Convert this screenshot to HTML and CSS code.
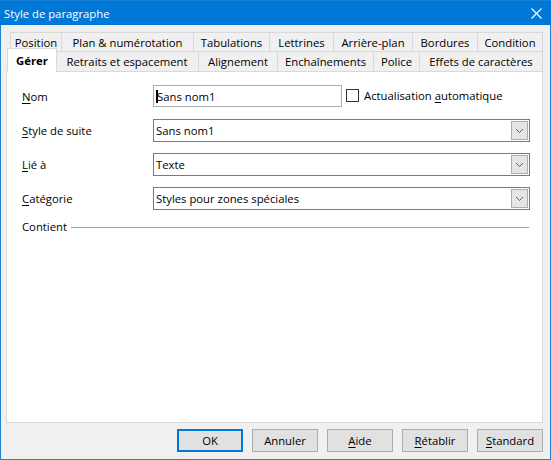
FILE: index.html
```html
<!DOCTYPE html>
<html lang="fr">
<head>
<meta charset="utf-8">
<title>Style de paragraphe</title>
<link rel="stylesheet" href="styles.css">
</head>
<body>
<div class="window">
  <div class="titlebar">
    <span class="title">Style de paragraphe</span>
    <svg class="close" width="11" height="11" viewBox="0 0 11 11"><path d="M0.5 0.5 L10.5 10.5 M10.5 0.5 L0.5 10.5" stroke="#fff" stroke-width="1.1" fill="none"/></svg>
  </div>
  <div class="tabs">
    <div class="tabrow row1">
      <div class="tab">Position</div>
      <div class="tab">Plan &amp; numérotation</div>
      <div class="tab">Tabulations</div>
      <div class="tab">Lettrines</div>
      <div class="tab">Arrière-plan</div>
      <div class="tab">Bordures</div>
      <div class="tab">Condition</div>
    </div>
    <div class="tabrow row2">
      <div class="tab selected">Gérer</div>
      <div class="tab">Retraits et espacement</div>
      <div class="tab">Alignement</div>
      <div class="tab">Enchaînements</div>
      <div class="tab">Police</div>
      <div class="tab">Effets de caractères</div>
    </div>
  </div>
  <div class="panel">
    <div class="form">
      <div class="lbl"><u>N</u>om</div>
      <div class="line">
        <div class="entry"><span class="caret"></span>Sans nom1</div>
        <div class="check"><span class="box"></span><span>Actualisation <u>a</u>utomatique</span></div>
      </div>
      <div class="lbl"><u>S</u>tyle de suite</div>
      <div class="combo"><span class="value">Sans nom1</span><span class="drop"><svg width="9" height="6" viewBox="0 0 9 6"><path d="M1 1 L4.5 4.5 L8 1" stroke="#606060" stroke-width="1" fill="none"/></svg></span></div>
      <div class="lbl"><u>L</u>ié à</div>
      <div class="combo"><span class="value">Texte</span><span class="drop"><svg width="9" height="6" viewBox="0 0 9 6"><path d="M1 1 L4.5 4.5 L8 1" stroke="#606060" stroke-width="1" fill="none"/></svg></span></div>
      <div class="lbl"><u>C</u>atégorie</div>
      <div class="combo"><span class="value">Styles pour zones spéciales</span><span class="drop"><svg width="9" height="6" viewBox="0 0 9 6"><path d="M1 1 L4.5 4.5 L8 1" stroke="#606060" stroke-width="1" fill="none"/></svg></span></div>
    </div>
    <div class="section"><span>Contient</span><span class="rule"></span></div>
  </div>
  <div class="buttons">
    <div class="btn default">OK</div>
    <div class="btn">Annuler</div>
    <div class="btn"><u>A</u>ide</div>
    <div class="btn"><u>R</u>établir</div>
    <div class="btn"><u>S</u>tandard</div>
  </div>
</div>
</body>
</html>
```
FILE: styles.css
```css
html, body {
  margin: 0;
  padding: 0;
}
body {
  font-family: "Open Sans", "Noto Sans", "DejaVu Sans", sans-serif;
  font-size: 11.3px;
  color: #000;
  background: #f0f0f0;
}
u {
  text-decoration: underline;
  text-underline-offset: 2px;
}
.window {
  width: 551px;
  height: 460px;
  box-sizing: border-box;
  border: 1px solid #1883d7;
  background: #f0f0f0;
  display: flex;
  flex-direction: column;
}
.titlebar {
  height: 24px;
  background: #0078d7;
  color: #fff;
  display: flex;
  align-items: center;
  justify-content: space-between;
  padding: 0 9px 0 4px;
  margin: 0 -1px;
}
.title {
  font-size: 11.3px;
}
.close {
  display: block;
}
.tabs {
  margin-top: 7px;
}
.tabrow {
  display: grid;
}
.row1 {
  margin-left: 9px;
  grid-template-columns: 52px 132px 76px 64px 79px 65px 65px;
  grid-template-rows: 19px;
}
.row2 {
  margin-left: 8px;
  grid-template-columns: 47px 143px 79px 96px 46px 123px;
  grid-template-rows: 20px;
}
.tab {
  box-sizing: border-box;
  border-top: 1px solid #d9d9d9;
  border-right: 1px solid #d9d9d9;
  background: #f0f0f0;
  display: flex;
  align-items: center;
  justify-content: center;
  white-space: nowrap;
}
.tab:first-child {
  border-left: 1px solid #d9d9d9;
}
.tab.selected {
  position: relative;
  z-index: 1;
  background: #fff;
  font-weight: bold;
  margin: -3px -1px -1px -2px;
  padding-bottom: 0;
}
.panel {
  margin-left: 5px;
  width: 537px;
  height: 352px;
  box-sizing: border-box;
  border: 1px solid #d9d9d9;
  background: #fff;
  padding: 13px 12px 0 15px;
}
.form {
  display: grid;
  grid-template-columns: 131px 377px;
  grid-template-rows: repeat(4, 23px);
  row-gap: 11px;
  align-items: center;
}
.lbl {
  white-space: nowrap;
}
.line {
  display: flex;
  align-items: center;
  height: 23px;
}
.entry {
  position: relative;
  width: 189px;
  height: 22px;
  box-sizing: border-box;
  border: 1px solid #abadb3;
  padding-left: 3px;
  display: flex;
  align-items: center;
  align-self: flex-start;
}
.caret {
  position: absolute;
  left: 2px;
  top: 4px;
  width: 2px;
  height: 13px;
  background: #000;
}
.check {
  display: flex;
  align-items: center;
  margin-left: 4px;
  white-space: nowrap;
  margin-top: -3px;
}
.box {
  width: 13px;
  height: 13px;
  box-sizing: border-box;
  border: 1px solid #333;
  background: #fff;
  margin-right: 5px;
}
.combo {
  height: 23px;
  box-sizing: border-box;
  border: 1px solid #7a7a7a;
  display: flex;
  align-items: stretch;
  padding: 1px 1px 1px 2px;
}
.value {
  flex: 1;
  display: flex;
  align-items: center;
  white-space: nowrap;
}
.drop {
  width: 17px;
  box-sizing: border-box;
  border: 1px solid #adadad;
  background: #e5e5e5;
  display: flex;
  align-items: center;
  justify-content: center;
}
.drop svg {
  display: block;
}
.section {
  display: flex;
  align-items: center;
  margin-top: 9px;
  width: 507px;
}
.rule {
  flex: 1;
  height: 1px;
  background: #a0a0a0;
  margin-left: 4px;
  margin-top: 1px;
}
.buttons {
  display: flex;
  justify-content: flex-end;
  gap: 9px;
  padding-right: 7px;
  margin-top: 6px;
}
.btn {
  width: 66px;
  height: 23px;
  box-sizing: border-box;
  border: 1px solid #adadad;
  background: #e1e1e1;
  display: flex;
  align-items: center;
  justify-content: center;
}
.btn.default {
  border: 2px solid #0078d7;
}
```
